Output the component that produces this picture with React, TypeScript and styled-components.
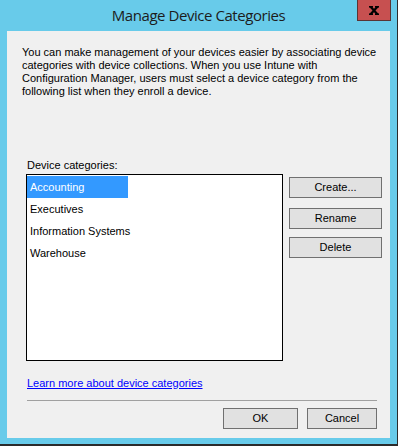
import React from 'react';
import styled, { createGlobalStyle } from 'styled-components';

const GlobalStyle = createGlobalStyle`
    html, body {
        margin: 0;
        padding: 0;
        background: #ffffff;
    }
    * {
        box-sizing: border-box;
    }
`;

const Window = styled.div`
    width: 398px;
    height: 446px;
    display: flex;
    flex-direction: column;
    background: #68cbea;
    border-right: 1px solid #2b2b2b;
    border-bottom: 2px solid #2b2b2b;
    font-family: "Liberation Sans", Arial, sans-serif;
    font-size: 11px;
    line-height: 13px;
    color: #000;
`;

const TitleBar = styled.div`
    height: 31px;
    flex: none;
    display: grid;
    grid-template-columns: 1fr auto 1fr;
    align-items: start;
`;

const Title = styled.div`
    grid-column: 2;
    padding-top: 5px;
    font-family: "Open Sans", "Noto Sans", sans-serif;
    font-size: 15px;
    line-height: 20px;
    letter-spacing: -0.45px;
    color: #1c1c1c;
    white-space: nowrap;
`;

const CloseButton = styled.div`
    grid-column: 3;
    justify-self: end;
    margin-right: 6px;
    width: 34px;
    height: 21px;
    background: #c75050;
    border: 1px solid #5a3434;
    border-top: none;
    display: flex;
    align-items: center;
    justify-content: center;
    padding-top: 1px;
`;

const Panel = styled.div`
    flex: 1;
    margin: 0 7px 6px 7px;
    background: #f0f0f0;
    display: flex;
    flex-direction: column;
`;

const Description = styled.p`
    margin: 15px 0 0 15px;
    white-space: nowrap;
`;

const Label = styled.div`
    margin: 61px 0 0 20px;
`;

const ListRow = styled.div`
    display: flex;
    margin: 2px 0 0 19px;
`;

const ListBox = styled.ul`
    list-style: none;
    margin: 0;
    padding: 1px 0 0 0;
    width: 257px;
    height: 187px;
    background: #fff;
    border: 1px solid #000;
`;

const ListItem = styled.li<{ $selected?: boolean }>`
    width: 101px;
    height: 22px;
    display: flex;
    align-items: center;
    padding-left: 3px;
    white-space: nowrap;
    background: ${(p) => (p.$selected ? '#3399ff' : 'transparent')};
    color: ${(p) => (p.$selected ? '#fff' : '#000')};
`;

const SideButtons = styled.div`
    display: flex;
    flex-direction: column;
    margin-left: 6px;
`;

const Button = styled.button<{ $w: number; $mt?: number }>`
    width: ${(p) => p.$w}px;
    height: 21px;
    margin-top: ${(p) => p.$mt ?? 0}px;
    padding: 0;
    background: #e1e1e1;
    border: 1px solid #707070;
    font-family: "Liberation Sans", Arial, sans-serif;
    font-size: 11px;
    line-height: 13px;
    color: #000;
`;

const LearnLink = styled.a`
    align-self: flex-start;
    margin: 16px 0 0 20px;
    color: #0000ff;
    text-decoration: underline;
    cursor: pointer;
`;

const Separator = styled.div`
    height: 1px;
    margin: 10px 13px 0 20px;
    background: #a0a0a0;
`;

const Footer = styled.div`
    display: flex;
    justify-content: flex-end;
    gap: 9px;
    margin: 7px 13px 0 0;
`;

const categories = ['Accounting', 'Executives', 'Information Systems', 'Warehouse'];

const CloseGlyph = () => (
    <svg width="10" height="9" viewBox="0 0 10 9">
        <path d="M1.6 0.8 L8.4 8.2 M8.4 0.8 L1.6 8.2" stroke="#000" strokeWidth="2.3" />
        <rect x="0" y="0" width="4" height="1.6" fill="#000" />
        <rect x="6" y="0" width="4" height="1.6" fill="#000" />
        <rect x="0" y="7.4" width="4" height="1.6" fill="#000" />
        <rect x="6" y="7.4" width="4" height="1.6" fill="#000" />
    </svg>
);

export default function App() {
    return (
        <>
            <GlobalStyle />
            <Window>
                <TitleBar>
                    <Title>Manage Device Categories</Title>
                    <CloseButton>
                        <CloseGlyph />
                    </CloseButton>
                </TitleBar>
                <Panel>
                    <Description>
                        You can make management of your devices easier by associating device<br />
                        categories with device collections. When you use Intune with<br />
                        Configuration Manager, users must select a device category from the<br />
                        following list when they enroll a device.
                    </Description>
                    <Label>Device categories:</Label>
                    <ListRow>
                        <ListBox>
                            {categories.map((c, i) => (
                                <ListItem key={c} $selected={i === 0}>{c}</ListItem>
                            ))}
                        </ListBox>
                        <SideButtons>
                            <Button $w={93} $mt={3}>Create...</Button>
                            <Button $w={93} $mt={10}>Rename</Button>
                            <Button $w={93} $mt={8}>Delete</Button>
                        </SideButtons>
                    </ListRow>
                    <LearnLink>Learn more about device categories</LearnLink>
                    <Separator />
                    <Footer>
                        <Button $w={75}>OK</Button>
                        <Button $w={70}>Cancel</Button>
                    </Footer>
                </Panel>
            </Window>
        </>
    );
}
